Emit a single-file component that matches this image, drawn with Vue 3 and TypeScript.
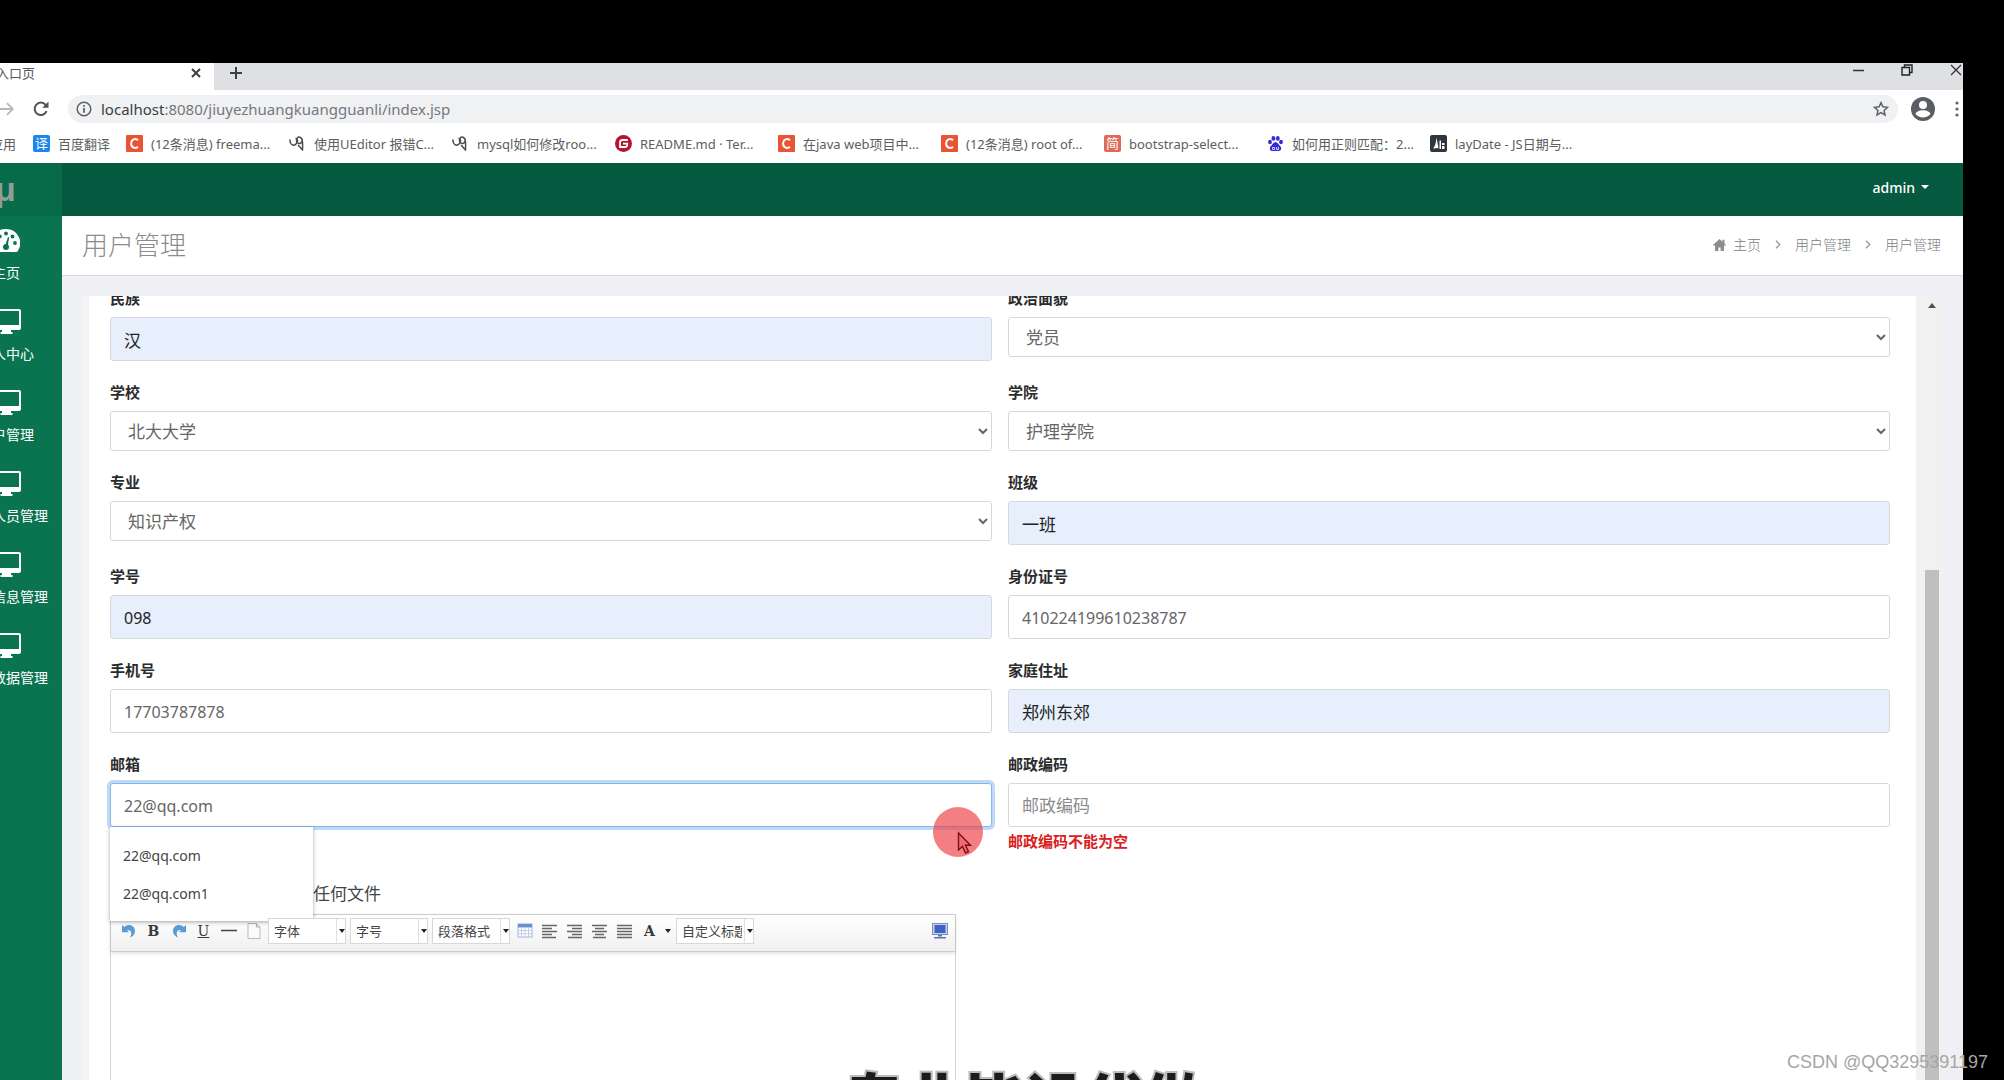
<script setup lang="ts">
import { ref } from 'vue'

interface Bookmark {
  icon: string
  text: string
}

interface Field {
  id: string
  label: string
  kind: 'text' | 'select'
  value: string
  filled?: boolean
  active?: boolean
  placeholder?: string
  error?: string
}

const bookmarks: Bookmark[] = [
  { icon: 'csdn', text: '(12条消息) freema...' },
  { icon: 'swirl', text: '使用UEditor 报错C...' },
  { icon: 'swirl', text: 'mysql如何修改roo...' },
  { icon: 'gitee', text: 'README.md · Ter...' },
  { icon: 'csdn', text: '在java web项目中...' },
  { icon: 'csdn', text: '(12条消息) root of...' },
  { icon: 'jian', text: 'bootstrap-select...' },
  { icon: 'paw', text: '如何用正则匹配：2...' },
  { icon: 'lay', text: 'layDate - JS日期与...' },
]

const menu: string[] = ['人中心', '户管理', '人员管理', '信息管理', '数据管理']

const fields = ref<Field[]>([
  { id: 'nation', label: '民族', kind: 'text', value: '汉', filled: true },
  { id: 'politics', label: '政治面貌', kind: 'select', value: '党员' },
  { id: 'school', label: '学校', kind: 'select', value: '北大大学' },
  { id: 'college', label: '学院', kind: 'select', value: '护理学院' },
  { id: 'major', label: '专业', kind: 'select', value: '知识产权' },
  { id: 'class', label: '班级', kind: 'text', value: '一班', filled: true },
  { id: 'number', label: '学号', kind: 'text', value: '098', filled: true },
  { id: 'idcard', label: '身份证号', kind: 'text', value: '410224199610238787' },
  { id: 'phone', label: '手机号', kind: 'text', value: '17703787878' },
  { id: 'address', label: '家庭住址', kind: 'text', value: '郑州东郊', filled: true },
  { id: 'email', label: '邮箱', kind: 'text', value: '22@qq.com', active: true },
  { id: 'postcode', label: '邮政编码', kind: 'text', value: '', placeholder: '邮政编码', error: '邮政编码不能为空' },
])

const isHan = (text: string): boolean => /[\u4e00-\u9fff]/.test(text)

const suggestions: string[] = ['22@qq.com', '22@qq.com1']
const combos: string[] = ['字体', '字号', '段落格式']
const aligns: { name: string; path: string }[] = [
  { name: '左对齐', path: 'M1 2.5h15M1 5.5h10M1 8.5h15M1 11.5h10M1 14.5h14' },
  { name: '右对齐', path: 'M1 2.5h15M6 5.5h10M1 8.5h15M6 11.5h10M2 14.5h14' },
  { name: '居中', path: 'M1 2.5h15M4 5.5h9M1 8.5h15M4 11.5h9M2 14.5h13' },
  { name: '两端对齐', path: 'M1 2.5h15M1 5.5h15M1 8.5h15M1 11.5h15M1 14.5h15' },
]
</script>

<template>
  <div class="screen">
    <div class="window">
      <div class="tabs">
        <div class="tab">
          <span class="tab-title">入口页</span>
          <button class="bare" aria-label="关闭标签页">
            <svg width="10" height="10" viewBox="0 0 10 10"><path d="M1 1l8 8M9 1l-8 8" stroke="#3c4043" stroke-width="2" /></svg>
          </button>
        </div>
        <button class="bare new-tab" aria-label="新标签页">
          <svg width="14" height="14" viewBox="0 0 14 14"><path d="M7 1v12M1 7h12" stroke="#3c4043" stroke-width="2" /></svg>
        </button>
        <div class="controls">
          <button class="bare" aria-label="最小化">
            <svg width="12" height="12" viewBox="0 0 12 12"><path d="M1 6.5h11" stroke="#333" stroke-width="1.5" /></svg>
          </button>
          <button class="bare" aria-label="还原">
            <svg width="12" height="12" viewBox="0 0 12 12" fill="none" stroke="#222" stroke-width="1.4"><path d="M1 3.5h7.5v7.5H1zM3.5 3.5V1H11v7.5H8.5" /></svg>
          </button>
          <button class="bare" aria-label="关闭">
            <svg width="12" height="12" viewBox="0 0 12 12"><path d="M1 1l10 10M11 1L1 11" stroke="#333" stroke-width="1.3" /></svg>
          </button>
        </div>
      </div>

      <div class="toolbar">
        <button class="bare forward" aria-label="前进">
          <svg width="14" height="14" viewBox="0 0 14 14" fill="none" stroke="#b5b8bb" stroke-width="1.8"><path d="M0 7h12.5M7 1.2L12.8 7 7 12.8" /></svg>
        </button>
        <button class="bare reload" aria-label="重新加载">
          <svg width="16" height="16" viewBox="0 0 16 16"><path d="M13.6 10.2A6.2 6.2 0 1 1 12.6 3.8" fill="none" stroke="#505357" stroke-width="2" /><path d="M15.5.5v6.3H9.2z" fill="#505357" /></svg>
        </button>
        <div class="omnibox">
          <svg width="16" height="16" viewBox="0 0 16 16" fill="none" stroke="#5f6368"><circle cx="8" cy="8" r="6.8" stroke-width="1.5" /><path d="M8 7v4.8M8 4v1.8" stroke-width="1.8" /></svg>
          <span class="url"><b>localhost</b>:8080/jiuyezhuangkuangguanli/index.jsp</span>
          <button class="bare" aria-label="收藏">
            <svg width="16" height="16" viewBox="0 0 16 16"><path d="M8 1.6l1.9 4.2 4.6.5-3.4 3.1.9 4.6L8 11.6 4 14l.9-4.6L1.500 6.300l4.600-.5z" fill="none" stroke="#5f6368" stroke-width="1.5" /></svg>
          </button>
        </div>
        <button class="bare" aria-label="用户">
          <svg width="24" height="24" viewBox="0 0 24 24"><circle cx="12" cy="12" r="12" fill="#5a5d61" /><circle cx="12" cy="8" r="4" fill="#fff" /><path d="M4.500 17c1.500-5 13.500-5 15 0-3.500 4.600-11.500 4.600-15 0z" fill="#fff" /></svg>
        </button>
        <button class="bare more" aria-label="菜单">
          <svg width="4" height="16" viewBox="0 0 4 16" fill="#5f6368"><circle cx="2" cy="2" r="1.600" /><circle cx="2" cy="8" r="1.600" /><circle cx="2" cy="14" r="1.600" /></svg>
        </button>
      </div>

      <nav class="bookmarks">
        <a href="#" class="apps">应用</a>
        <a href="#" class="mark first"><span class="chip blue">译</span>百度翻译</a>
        <a v-for="(b, i) in bookmarks" :key="i" href="#" class="mark">
          <span v-if="b.icon === 'jian'" class="chip rose">简</span>
          <svg v-else width="17" height="17" viewBox="0 0 17 17">
            <template v-if="b.icon === 'csdn'">
              <rect width="17" height="17" rx="1" fill="#ea5435" />
              <path d="M12 5.200C9 2.800 5.300 4.500 5.100 8.300c-.2 4 3.600 5.900 6.900 3.600" fill="none" stroke="#fff" stroke-width="1.900" />
            </template>
            <template v-else-if="b.icon === 'swirl'">
              <path d="M1 4.500c-.5 5 3.500 7.500 6.500 4 1.500-2 1-5.500-1-5M8 7.500C6.500 3.500 9 1 11.500 2.500s2 5.500-.5 6-3.500-2-2-3.500M13 4c1 4 .5 8 .5 11.500M9 10l5 5.500" fill="none" stroke="#4a4a4a" stroke-width="1.500" />
            </template>
            <template v-else-if="b.icon === 'gitee'">
              <circle cx="8.500" cy="8.500" r="8.500" fill="#b8142f" />
              <path d="M12.800 5H7.500Q5 5 5 7.500V12h5.200q2 0 2-2.200V8.700H8" fill="none" stroke="#fff" stroke-width="1.800" />
            </template>
            <template v-else-if="b.icon === 'paw'">
              <g fill="#322fd0"><ellipse cx="3" cy="7" rx="1.900" ry="2.300" /><ellipse cx="6.400" cy="3.400" rx="1.900" ry="2.400" /><ellipse cx="10.800" cy="3.400" rx="1.900" ry="2.400" /><ellipse cx="14" cy="7" rx="1.900" ry="2.300" /><path d="M8.500 7c2 0 3 2.500 5 4.500 1.500 2 .5 4.500-2 4.500H5.500C3 16 2 13.500 3.500 11.500 5.500 9.500 6.500 7 8.500 7z" /></g>
              <path d="M5.500 12.500h2v2h-2zM9.500 12v2.500h2V12" fill="none" stroke="#cfd0ff" />
            </template>
            <template v-else>
              <rect width="17" height="17" rx="2" fill="#2f363c" />
              <path d="M3 13.500C6 10 6 6 6.500 2.500L8.500 13zM9.500 5.500h1.500V14H9.500zM12 8h2.500v2H12zM12 11h2.500v3H12z" fill="#fff" />
            </template>
          </svg>
          {{ b.text }}
        </a>
      </nav>

      <div class="app">
        <aside class="sidebar">
          <div class="logo">μ</div>
          <a href="#" class="item">
            <svg width="28" height="25" viewBox="0 0 28 25">
              <path d="M14 1A14 14 0 0 0 2 22.500q.5 1.500 2 1.500h20q1.500 0 2-1.500A14 14 0 0 0 14 1z" fill="#fff" />
              <g fill="#0a7450"><circle cx="5" cy="15" r="1.900" /><circle cx="7.800" cy="8.500" r="1.900" /><circle cx="14" cy="5.500" r="1.900" /><circle cx="20.500" cy="8.500" r="1.900" /><circle cx="23" cy="15" r="1.900" /><circle cx="14" cy="19" r="3" /><path d="M13 18l3-9 1.200.400L15.500 19z" /></g>
            </svg>
            <span>主页</span>
          </a>
          <a v-for="name in menu" :key="name" href="#" class="item">
            <svg width="29" height="25" viewBox="0 0 29 25"><path d="M2 0h25q2 0 2 2v17q0 2-2 2h-8v2h1.500v2h-12v-2H10v-2H2q-2 0-2-2V2q0-2 2-2zm0 2v14h25V2z" fill="#fff" fill-rule="evenodd" /></svg>
            <span>{{ name }}</span>
          </a>
        </aside>

        <div class="main">
          <header class="navbar">
            <button class="user">admin<i class="caret"></i></button>
          </header>
          <div class="heading">
            <h1>用户管理</h1>
            <nav class="crumbs">
              <a href="#"><svg width="13" height="12" viewBox="0 0 13 12" fill="#8d8d8d"><path d="M6.500 0L9.500 2.800V.8h2v3.900L13 6l-.9.900L11 6v6H7.600V8.500H5.400V12H2V6L.9 6.900 0 6z" /></svg>主页</a>
              <svg width="6" height="9" viewBox="0 0 6 9"><path d="M1 .8l3.800 3.700L1 8.200" fill="none" stroke="#999" stroke-width="1.300" /></svg>
              <a href="#">用户管理</a>
              <svg width="6" height="9" viewBox="0 0 6 9"><path d="M1 .8l3.800 3.700L1 8.200" fill="none" stroke="#999" stroke-width="1.300" /></svg>
              <span>用户管理</span>
            </nav>
          </div>

          <div class="scroller">
            <form class="card" @submit.prevent>
              <div class="grid">
                <div v-for="f in fields" :key="f.id" class="field">
                  <label :for="f.id">{{ f.label }}</label>
                  <select v-if="f.kind === 'select'" :id="f.id" v-model="f.value" class="han">
                    <option>{{ f.value }}</option>
                  </select>
                  <input
                    v-else
                    :id="f.id"
                    v-model="f.value"
                    type="text"
                    :placeholder="f.placeholder"
                    :class="{ filled: f.filled, active: f.active, han: isHan(f.value || f.placeholder || '') }"
                  />
                  <p v-if="f.error" class="error">{{ f.error }}</p>
                  <ul v-if="f.active" class="suggest">
                    <li v-for="s in suggestions" :key="s">{{ s }}</li>
                  </ul>
                </div>
              </div>
              <div class="upload">任何文件</div>
              <div class="editor">
                <div class="tools">
                  <button class="tool" aria-label="撤销">
                    <svg width="16" height="16" viewBox="0 0 16 16"><path d="M1 2l2.200 2C7 0 14 2 14 8c0 3-2 5.500-5 6.500C11 11 11 6.500 6 7l2 2.200H1z" fill="#5a9bd5" /></svg>
                  </button>
                  <button class="tool serif">B</button>
                  <button class="tool" aria-label="重做">
                    <svg width="16" height="16" viewBox="0 0 16 16"><path d="M15 2l-2.200 2C9 0 2 2 2 8c0 3 2 5.500 5 6.500C5 11 5 6.500 10 7L8 9.200h7z" fill="#5a9bd5" /></svg>
                  </button>
                  <button class="tool serif under">U</button>
                  <button class="tool" aria-label="分隔线">
                    <svg width="16" height="16" viewBox="0 0 16 16"><path d="M0 7.500h16" stroke="#444" stroke-width="1.500" /></svg>
                  </button>
                  <button class="tool" aria-label="清空文档">
                    <svg width="16" height="16" viewBox="0 0 16 16"><path d="M2 .5h8.500l3.500 3.500v11.500H2z" fill="#fafafa" stroke="#bbb" /><path d="M10.500.5V4H14" fill="none" stroke="#aaa" /></svg>
                  </button>
                  <span v-for="c in combos" :key="c" class="combo">
                    <select :aria-label="c"><option>{{ c }}</option></select>
                  </span>
                  <button class="tool" aria-label="表格">
                    <svg width="16" height="16" viewBox="0 0 16 16"><rect x="1" y="1" width="14" height="13" fill="#fff" stroke="#9fb4d8" /><path d="M1 1h14v3.500H1z" fill="#6b90cf" /><path d="M1 7.500h14M1 10.800h14M4.500 4.500V14M8 4.500V14M11.500 4.500V14" stroke="#c3cfe4" /></svg>
                  </button>
                  <button v-for="a in aligns" :key="a.name" class="tool" :aria-label="a.name">
                    <svg width="17" height="16" viewBox="0 0 17 16"><path :d="a.path" stroke="#666" stroke-width="1.500" /></svg>
                  </button>
                  <button class="tool serif">A</button>
                  <button class="tool drop" aria-label="字体颜色"><i class="arrow"></i></button>
                  <span class="combo">
                    <select aria-label="自定义标题"><option>自定义标题</option></select>
                  </span>
                  <button class="tool full" aria-label="全屏">
                    <svg width="16" height="16" viewBox="0 0 16 16"><rect x=".5" y=".5" width="15" height="11" fill="#c9d2e6" stroke="#7d8fb5" /><rect x="2.500" y="2" width="11" height="8" fill="#3f63c4" /><path d="M6 12h4v1.500H6zM2 14h12v1.500H2z" fill="#5d77ae" /></svg>
                  </button>
                </div>
                <div class="page" contenteditable="true" role="textbox" aria-label="正文"></div>
              </div>
            </form>
            <div class="track">
              <i class="up"></i>
              <div class="thumb"></div>
            </div>
          </div>
        </div>
      </div>
    </div>

    <div class="pointer">
      <svg width="50" height="50" viewBox="0 0 50 50"><circle cx="25" cy="25" r="25" fill="#ee3a40" fill-opacity=".65" /><path d="M25.500 26v17l4-3.600 3 6.600 3-1.400-3-6.400h5z" fill="#f36b6f" stroke="#7a0f18" stroke-width="1.400" /></svg>
    </div>
    <div class="caption">专业毕设代做</div>
    <div class="watermark">CSDN @QQ3295391197</div>
  </div>
</template>

<style>
body {
  margin: 0;
  background: #000;
}
</style>

<style scoped>
* {
  box-sizing: border-box;
}
.screen {
  position: relative;
  display: flex;
  height: 100vh;
  padding: 63px 41px 0 0;
  overflow: hidden;
  background: #000;
  font-family: "Noto Sans", "Noto Sans CJK SC", sans-serif;
  color: #333;
}
.window {
  display: flex;
  flex: 1;
  flex-direction: column;
  min-width: 0;
  background: #fff;
}
a {
  color: inherit;
  text-decoration: none;
}
svg {
  display: block;
  flex: none;
}
button,
input,
select {
  font-family: inherit;
}
.bare {
  display: flex;
  padding: 0;
  border: 0;
  background: none;
}

.tabs {
  display: flex;
  flex: none;
  height: 27px;
  background: #dfe0e4;
}
.tab {
  display: flex;
  align-items: center;
  justify-content: space-between;
  width: 214px;
  padding: 0 13px 8px 0;
  background: #fff;
}
.tab-title {
  margin-left: -4px;
  font-size: 13px;
  line-height: 18px;
  color: #55585c;
}
.new-tab {
  align-items: center;
  padding: 0 15px 8px;
}
.controls {
  display: flex;
  gap: 37px;
  margin-left: auto;
  padding-right: 1px;
  align-items: center;
  padding-bottom: 13px;
}

.toolbar {
  display: flex;
  flex: none;
  align-items: center;
  height: 36px;
  padding: 5px 4px 3px 0;
}
.reload {
  margin: 0 19px;
}
.omnibox {
  display: flex;
  flex: 1;
  align-items: center;
  height: 28px;
  margin-right: 13px;
  padding: 0 9px 0 8px;
  border-radius: 14px;
  background: #f0f1f3;
}
.url {
  flex: 1;
  margin-left: 9px;
  font-size: 15px;
  line-height: 24px;
  color: #75787c;
}
.url b {
  font-weight: 400;
  color: #3c4043;
}
.more {
  margin-left: 20px;
}

.bookmarks {
  display: flex;
  flex: none;
  align-items: center;
  height: 37px;
  padding-bottom: 2px;
  font-size: 13px;
  line-height: 20px;
  white-space: nowrap;
  color: #5b5e62;
}
.apps {
  width: 43px;
  margin-left: -10px;
}
.mark {
  display: flex;
  flex: none;
  align-items: center;
  gap: 8px;
  width: 163px;
}
.mark.first {
  width: 93px;
}
.chip {
  width: 17px;
  height: 17px;
  border-radius: 2px;
  font-size: 13px;
  line-height: 17px;
  text-align: center;
  color: #fff;
}
.blue {
  background: #1b86ee;
}
.rose {
  background: #dc6a58;
}

.app {
  display: flex;
  flex: 1;
  min-height: 0;
}
.sidebar {
  flex: none;
  width: 62px;
  overflow: hidden;
  background: #0a7450;
}
.logo {
  height: 53px;
  margin-bottom: 12px;
  background: #076a49;
  font-family: "Liberation Sans", sans-serif;
  font-size: 34px;
  font-weight: 700;
  line-height: 52px;
  text-indent: -5px;
  color: #8f9d97;
}
.item {
  display: flex;
  flex-direction: column;
  gap: 10px;
  height: 81px;
  margin-left: -8px;
  font-size: 14px;
  line-height: 20px;
  white-space: nowrap;
  color: #fff;
}

.main {
  display: flex;
  flex: 1;
  flex-direction: column;
  min-width: 0;
  background: #eff0f3;
}
.navbar {
  display: flex;
  flex: none;
  justify-content: flex-end;
  height: 53px;
  padding: 0 34px 5px 0;
  background: #065a40;
}
.user {
  display: flex;
  align-items: center;
  gap: 6px;
  padding: 0;
  border: 0;
  background: none;
  font-size: 14px;
  font-weight: 500;
  color: #fff;
}
.caret {
  border: 4px solid transparent;
  border-top-color: #fff;
  border-bottom: 0;
}
.heading {
  display: flex;
  flex: none;
  align-items: center;
  justify-content: space-between;
  height: 60px;
  padding: 0 22px 2px 20px;
  border-bottom: 1px solid #d9dadc;
  background: #fff;
}
h1 {
  margin: 0;
  font-size: 26px;
  font-weight: 300;
  line-height: 36px;
  color: #8c8c8c;
}
.crumbs {
  display: flex;
  align-items: center;
  gap: 14px;
  font-size: 14px;
  font-weight: 300;
  line-height: 20px;
  color: #808080;
}
.crumbs a {
  display: flex;
  align-items: center;
  gap: 7px;
}

.scroller {
  display: flex;
  flex: 1;
  min-height: 0;
  margin: 20px 20px 0 20px;
  padding-left: 7px;
  overflow: hidden;
  background: #f5f5f7;
}
.card {
  flex: 1;
  min-width: 0;
  padding: 0 26px 0 21px;
  background: #fff;
}
.grid {
  display: grid;
  grid-template-columns: 1fr 1fr;
  align-items: start;
  gap: 20px 16px;
  margin-top: -9px;
}
.field {
  position: relative;
  display: flex;
  flex-direction: column;
}
.field label {
  margin-bottom: 8px;
  font-size: 15px;
  font-weight: 700;
  line-height: 22px;
  color: #2b2b2b;
}
.field input,
.field select {
  width: 100%;
  border: 1px solid #d6d8da;
  border-radius: 3px;
  outline: 0;
  background: #fff;
  font-size: 16px;
  color: #666;
}
.field input {
  height: 44px;
  padding: 1px 13px 0;
}
.field input::placeholder {
  color: #8b8b8b;
}
.field select {
  height: 40px;
  padding: 1px 13px 0;
}
.field .han {
  font-size: 17px;
}
.field input.han {
  padding-top: 0;
}
.field .filled {
  background: #e6effb;
  color: #222;
}
.field .active {
  border-color: #85b8ea;
  box-shadow: 0 0 0 3px #bfdaf8;
}
.error {
  margin: 3px 0 0;
  font-size: 15px;
  font-weight: 700;
  line-height: 22px;
  color: #d9201c;
}
.suggest {
  position: absolute;
  top: 100%;
  left: 0;
  width: 203px;
  margin: 0;
  padding: 10px 0 8px;
  background: #fff;
  box-shadow: 0 1px 4px rgba(0, 0, 0, 0.35);
  list-style: none;
}
.suggest li {
  padding: 0 13px;
  font-size: 14px;
  line-height: 38px;
  color: #444;
}
.upload {
  margin: 31px 0 9px 203px;
  font-size: 17px;
  line-height: 22px;
  color: #444;
}
.editor {
  width: 846px;
  max-width: 100%;
  border: 1px solid #d4d4d4;
}
.tools {
  display: flex;
  align-items: center;
  height: 37px;
  padding: 0 3px 4px 5px;
  border-bottom: 1px solid #ccc;
  background: linear-gradient(#fff, #f0f0f0);
  box-shadow: 0 1px 4px rgba(0, 0, 0, 0.15);
}
.tool {
  display: flex;
  flex: none;
  align-items: center;
  justify-content: center;
  width: 25px;
  height: 22px;
  padding: 0;
  border: 0;
  background: none;
}
.tool.serif {
  font-family: "DejaVu Serif", serif;
  font-size: 14px;
  font-weight: 700;
  color: #3a3a3a;
}
.tool.under {
  font-weight: 400;
  text-decoration: underline;
}
.tool.drop {
  width: 12px;
}
.arrow,
.combo::after {
  border: 3px solid transparent;
  border-top: 4px solid #222;
  border-bottom: 0;
}
.full {
  margin-left: auto;
}
.combo {
  position: relative;
  display: flex;
  flex: none;
  width: 78px;
  height: 26px;
  margin: 0 2px;
  border: 1px solid #d8d8d8;
  background: #fff;
}
.combo::after {
  position: absolute;
  top: 10px;
  right: 0;
  content: "";
}
.combo select {
  width: 68px;
  padding: 0 2px 0 5px;
  border: 0;
  border-right: 1px solid #e0e0e0;
  outline: 0;
  appearance: none;
  background: none;
  font-size: 13px;
  color: #444;
}
.page {
  height: 300px;
  outline: 0;
}
.track {
  display: flex;
  flex: none;
  flex-direction: column;
  align-items: center;
  width: 27px;
  padding: 7px 0 0 5px;
  background: #f1f1f2;
}
.up {
  border: 4px solid transparent;
  border-top: 0;
  border-bottom: 5px solid #505050;
}
.thumb {
  flex: 1;
  width: 14px;
  margin-top: 262px;
  background: #bfbfc0;
}

.pointer {
  position: absolute;
  top: 807px;
  left: 933px;
}
.caption {
  position: absolute;
  top: 1071px;
  left: 844px;
  font-size: 60px;
  font-weight: 900;
  line-height: 60px;
  white-space: nowrap;
  color: #1c1c1c;
  -webkit-text-stroke: 4px #bdbdbd;
  paint-order: stroke fill;
}
.watermark {
  position: absolute;
  right: 16px;
  bottom: 6px;
  font-family: "Liberation Sans", sans-serif;
  font-size: 18px;
  line-height: 24px;
  color: #a6a6a6;
}
</style>
